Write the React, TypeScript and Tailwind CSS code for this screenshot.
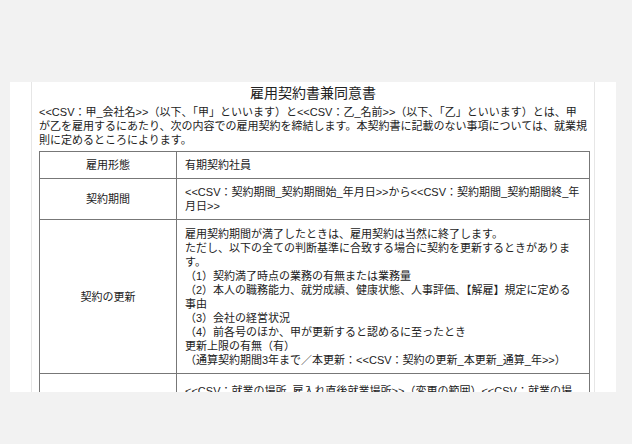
export default function App() {
  const font = { fontFamily: '"Liberation Sans", "Noto Sans CJK JP", sans-serif' };
  return (
    <div className="w-[632px] h-[444px] bg-[#f2f2f2] pt-[82px]" style={font}>
      <div className="ml-[10px] w-[606px] h-[310px] bg-white overflow-hidden">
        <div className="ml-[21px] w-[564px] h-full border-x border-[#e6e6e6] px-[7px] text-[#222]">
          <h1 className="text-center text-[14px] leading-[18px] pt-[2px] mb-[3px]">雇用契約書兼同意書</h1>
          <p className="text-[11px] leading-[14px] mb-[4px]">
            &lt;&lt;CSV：甲_会社名&gt;&gt;（以下、「甲」といいます）と&lt;&lt;CSV：乙_名前&gt;&gt;（以下、「乙」といいます）とは、甲が乙を雇用するにあたり、次の内容での雇用契約を締結します。本契約書に記載のない事項については、就業規則に定めるところによります。
          </p>
          <table className="w-[551px] border-collapse text-[11px] leading-[14px]">
            <tbody>
              <tr className="h-[27px]">
                <td className="w-[137px] border border-[#777] text-center">雇用形態</td>
                <td className="border border-[#777] px-[8px]">有期契約社員</td>
              </tr>
              <tr className="h-[41px]">
                <td className="border border-[#777] text-center">契約期間</td>
                <td className="border border-[#777] px-[8px] py-[6px]">
                  &lt;&lt;CSV：契約期間_契約期間始_年月日&gt;&gt;から&lt;&lt;CSV：契約期間_契約期間終_年月日&gt;&gt;
                </td>
              </tr>
              <tr>
                <td className="border border-[#777] text-center">契約の更新</td>
                <td className="border border-[#777] px-[8px] pt-[7px] pb-[6px]">
                  <div>雇用契約期間が満了したときは、雇用契約は当然に終了します。</div>
                  <div>ただし、以下の全ての判断基準に合致する場合に契約を更新するときがあります。</div>
                  <div>（1）契約満了時点の業務の有無または業務量</div>
                  <div>（2）本人の職務能力、就労成績、健康状態、人事評価、【解雇】規定に定める事由</div>
                  <div>（3）会社の経営状況</div>
                  <div>（4）前各号のほか、甲が更新すると認めるに至ったとき</div>
                  <div>更新上限の有無（有）</div>
                  <div>（通算契約期間3年まで／本更新：&lt;&lt;CSV：契約の更新_本更新_通算_年&gt;&gt;）</div>
                </td>
              </tr>
              <tr>
                <td className="border border-[#777]"></td>
                <td className="border border-[#777] px-[8px] pt-[10px]">
                  &lt;&lt;CSV：就業の場所_雇入れ直後就業場所&gt;&gt;（変更の範囲）&lt;&lt;CSV：就業の場所_変更範囲&gt;&gt;
                </td>
              </tr>
            </tbody>
          </table>
        </div>
      </div>
    </div>
  );
}
